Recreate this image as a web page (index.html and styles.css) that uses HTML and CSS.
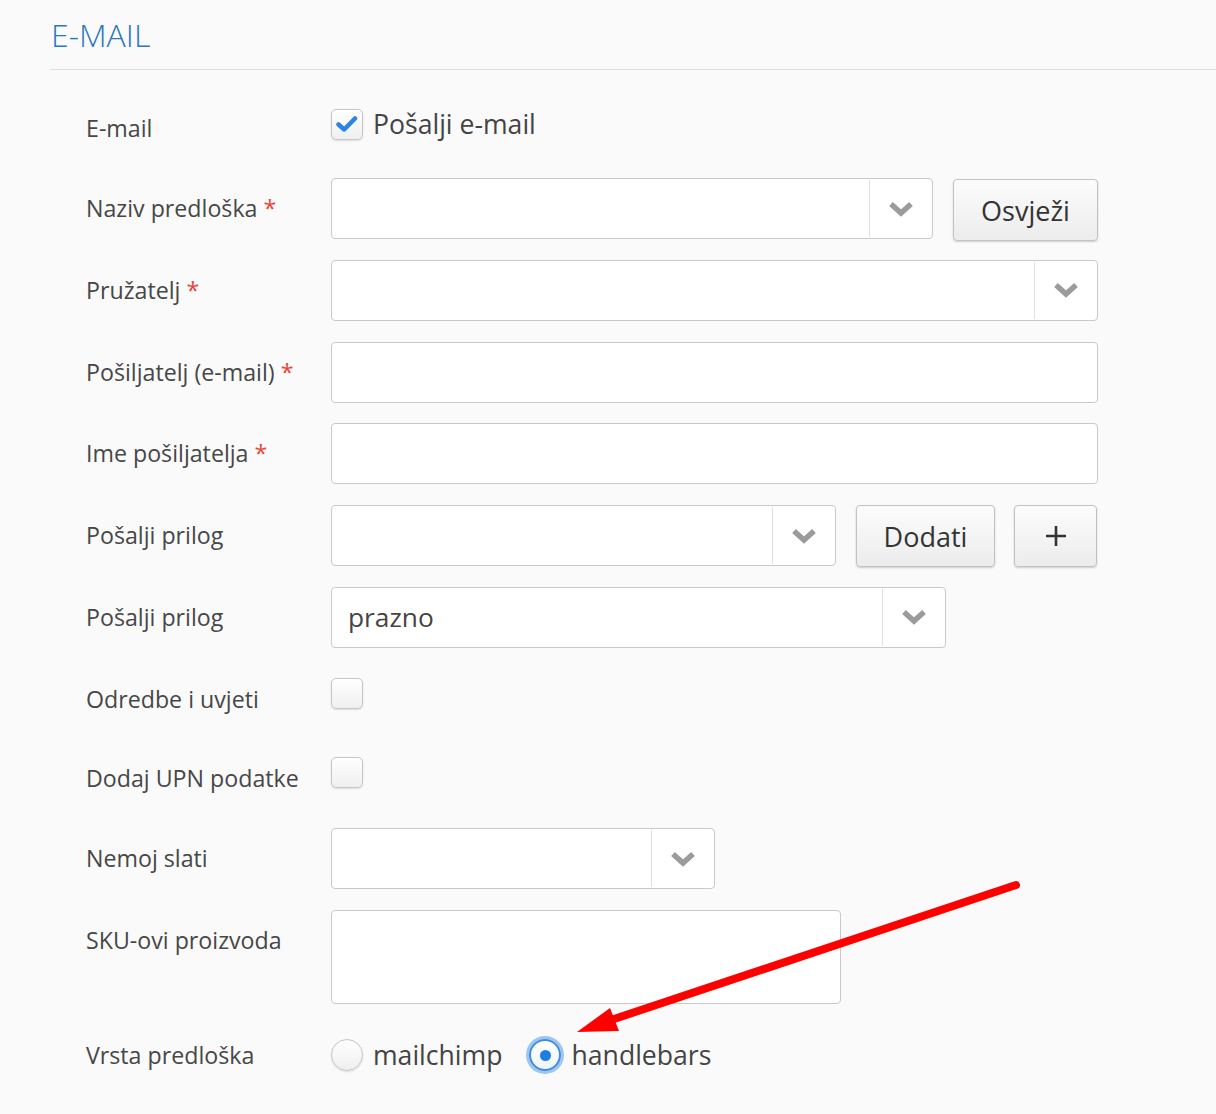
FILE: index.html
```html
<!DOCTYPE html>
<html lang="hr">
<head>
<meta charset="utf-8">
<title>E-mail</title>
<link rel="stylesheet" href="styles.css">
</head>
<body>
<div class="page">
  <h2 class="title">E-MAIL</h2>
  <div class="form">
    <div class="row row-first">
      <div class="label">E-mail</div>
      <div class="ctrl">
        <label class="check-line">
          <span class="cb cb-on">
            <svg width="22" height="18" viewBox="0 0 22 18"><path d="M2.5 9.5 L8.2 14.5 L19 3.5" fill="none" stroke="#2a84e2" stroke-width="4.5" stroke-linecap="round" stroke-linejoin="round"/></svg>
          </span>
          <span class="opt-text">Pošalji e-mail</span>
        </label>
      </div>
    </div>

    <div class="row">
      <div class="label">Naziv predloška <span class="req">*</span></div>
      <div class="ctrl">
        <div class="select w-naziv"><div class="sel-val"></div><div class="sel-arrow"><svg width="26" height="16" viewBox="0 0 26 16"><path d="M3 3 L13 12 L23 3" fill="none" stroke="#9b9b9b" stroke-width="5.5"/></svg></div></div>
        <button class="btn w-osvjezi">Osvježi</button>
      </div>
    </div>

    <div class="row">
      <div class="label">Pružatelj <span class="req">*</span></div>
      <div class="ctrl">
        <div class="select w-full"><div class="sel-val"></div><div class="sel-arrow"><svg width="26" height="16" viewBox="0 0 26 16"><path d="M3 3 L13 12 L23 3" fill="none" stroke="#9b9b9b" stroke-width="5.5"/></svg></div></div>
      </div>
    </div>

    <div class="row">
      <div class="label">Pošiljatelj (e-mail) <span class="req">*</span></div>
      <div class="ctrl"><div class="input w-full"></div></div>
    </div>

    <div class="row">
      <div class="label">Ime pošiljatelja <span class="req">*</span></div>
      <div class="ctrl"><div class="input w-full"></div></div>
    </div>

    <div class="row">
      <div class="label">Pošalji prilog</div>
      <div class="ctrl">
        <div class="select w-prilog"><div class="sel-val"></div><div class="sel-arrow"><svg width="26" height="16" viewBox="0 0 26 16"><path d="M3 3 L13 12 L23 3" fill="none" stroke="#9b9b9b" stroke-width="5.5"/></svg></div></div>
        <button class="btn w-dodati">Dodati</button>
        <button class="btn w-plus"><svg width="22" height="22" viewBox="0 0 22 22"><path d="M11 1 V21 M1 11 H21" stroke="#333" stroke-width="2.6"/></svg></button>
      </div>
    </div>

    <div class="row">
      <div class="label">Pošalji prilog</div>
      <div class="ctrl">
        <div class="select w-prazno"><div class="sel-val">prazno</div><div class="sel-arrow"><svg width="26" height="16" viewBox="0 0 26 16"><path d="M3 3 L13 12 L23 3" fill="none" stroke="#9b9b9b" stroke-width="5.5"/></svg></div></div>
      </div>
    </div>

    <div class="row row-check">
      <div class="label">Odredbe i uvjeti</div>
      <div class="ctrl"><span class="cb cb-solo"></span></div>
    </div>

    <div class="row row-check row-upn">
      <div class="label">Dodaj UPN podatke</div>
      <div class="ctrl"><span class="cb cb-solo"></span></div>
    </div>

    <div class="row">
      <div class="label">Nemoj slati</div>
      <div class="ctrl">
        <div class="select w-nemoj"><div class="sel-val"></div><div class="sel-arrow"><svg width="26" height="16" viewBox="0 0 26 16"><path d="M3 3 L13 12 L23 3" fill="none" stroke="#9b9b9b" stroke-width="5.5"/></svg></div></div>
      </div>
    </div>

    <div class="row row-sku">
      <div class="label">SKU-ovi proizvoda</div>
      <div class="ctrl"><div class="textarea"></div></div>
    </div>

    <div class="row row-radio">
      <div class="label">Vrsta predloška</div>
      <div class="ctrl">
        <label class="radio-line"><span class="radio"></span><span class="opt-text">mailchimp</span></label>
        <label class="radio-line radio-line-2"><span class="radio radio-on"><span class="dot"></span></span><span class="opt-text">handlebars</span></label>
      </div>
    </div>
  </div>

  <svg class="annot" width="1216" height="1114" viewBox="0 0 1216 1114">
    <line x1="1016" y1="885" x2="608" y2="1021" stroke="#ff0000" stroke-width="8" stroke-linecap="round"/>
    <polygon points="577,1032 610,1008 619,1031" fill="#ff0000"/>
  </svg>
</div>
</body>
</html>
```

FILE: styles.css
```css
html, body {
  margin: 0;
  padding: 0;
  background: #fafafa;
}

body {
  font-family: "Open Sans", "Noto Sans", "Liberation Sans", sans-serif;
  color: #444;
}

.page {
  position: relative;
  width: 1216px;
  height: 1114px;
  overflow: hidden;
  padding-left: 50px;
  box-sizing: border-box;
}

.title {
  margin: 0;
  padding: 13px 0 12px 1px;
  font-size: 32px;
  font-weight: 300;
  line-height: 44px;
  color: #2c76c2;
  border-bottom: 1px solid #dedede;
}

.form {
  padding-top: 28px;
  padding-left: 36px;
}

.row {
  display: grid;
  grid-template-columns: 245px 1fr;
  height: 61px;
  margin-bottom: 20.8px;
}

.row-first { margin-bottom: 19px; }
.row-check { margin-bottom: 18px; }
.row-upn { margin-bottom: 19.5px; }
.row-sku { height: 93px; margin-bottom: 21.5px; }

.label {
  font-size: 23.2px;
  line-height: 61px;
  color: #474747;
  white-space: nowrap;
}

.req {
  color: #ea4335;
}

.ctrl {
  display: flex;
  align-items: flex-start;
  gap: 20px;
}

.check-line, .radio-line {
  display: flex;
  align-items: center;
  gap: 10px;
  height: 61px;
}

.check-line {
  height: 52px;
}

.opt-text {
  font-size: 26.6px;
  color: #444;
  line-height: 36px;
}

.cb {
  box-sizing: border-box;
  width: 32px;
  height: 31px;
  border: 1px solid #c6c6c6;
  border-radius: 5px;
  background: linear-gradient(#ffffff, #efefef);
  box-shadow: 0 1px 2px rgba(0, 0, 0, 0.12);
  display: flex;
  align-items: center;
  justify-content: center;
}

.cb-solo {
  margin-top: 9.5px;
}

.select, .input, .textarea {
  box-sizing: border-box;
  height: 61px;
  background: #fff;
  border: 1px solid #c9c9c9;
  border-radius: 4px;
}

.select {
  display: flex;
}

.sel-val {
  flex: 1;
  font-size: 26.3px;
  line-height: 59px;
  padding-left: 16px;
  color: #444;
}

.sel-arrow {
  width: 62px;
  border-left: 1px solid #e0e0e0;
  display: flex;
  align-items: center;
  justify-content: center;
  margin: 1px 0;
}

.w-full { width: 767px; }
.w-naziv { width: 602px; }
.w-prilog { width: 505px; }
.w-prazno { width: 615px; }
.w-nemoj { width: 384px; }

.textarea {
  width: 510px;
  height: 94px;
}

.btn {
  box-sizing: border-box;
  height: 62px;
  border: 1px solid #c2c2c2;
  border-radius: 4px;
  background: linear-gradient(#fcfcfc, #ececec);
  box-shadow: 0 1px 2px rgba(0, 0, 0, 0.18);
  font-family: "Open Sans", "Noto Sans", "Liberation Sans", sans-serif;
  font-size: 27px;
  color: #333;
  padding: 0;
  display: flex;
  align-items: center;
  justify-content: center;
}

.w-osvjezi { width: 145px; margin-top: 1px; }
.w-dodati { width: 139px; }
.w-plus { width: 83px; margin-left: -1px; }

.row-radio .ctrl {
  gap: 24px;
}

.radio {
  box-sizing: border-box;
  width: 32px;
  height: 32px;
  border: 1px solid #c6c6c6;
  border-radius: 50%;
  background: linear-gradient(#ffffff, #efefef);
  box-shadow: 0 1px 2px rgba(0, 0, 0, 0.12);
  display: flex;
  align-items: center;
  justify-content: center;
}

.radio-on {
  border: 2px solid #3b8ae3;
  box-shadow: 0 0 0 3px #9cc6f1;
  background: linear-gradient(#ffffff, #f0f4f8);
}

.dot {
  width: 11px;
  height: 11px;
  border-radius: 50%;
  background: #1e7fe0;
}

.radio-line-2 {
  margin-left: 3px;
}

.annot {
  position: absolute;
  left: 0;
  top: 0;
  pointer-events: none;
}
```
